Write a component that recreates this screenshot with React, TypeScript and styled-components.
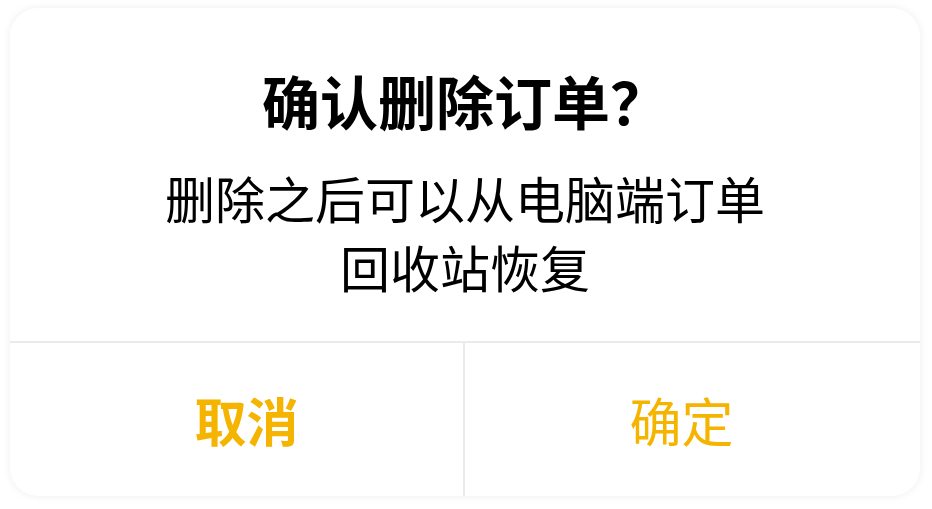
import React from "react";
import styled, { createGlobalStyle } from "styled-components";

const Global = createGlobalStyle`
  html, body { margin: 0; padding: 0; background: #ffffff; }
  body { font-family: "Noto Sans CJK SC", "Noto Sans", sans-serif; }
`;

const Page = styled.div`
  width: 932px;
  height: 509px;
  padding: 8px 0 0 10px;
  box-sizing: border-box;
`;

const Card = styled.div`
  width: 910px;
  height: 488px;
  border-radius: 28px;
  background: #ffffff;
  box-shadow: 0 0 9px rgba(0, 0, 0, 0.07);
  display: flex;
  flex-direction: column;
  overflow: hidden;
`;

const Body = styled.div`
  height: 335px;
  box-sizing: border-box;
  padding-top: 57px;
  display: flex;
  flex-direction: column;
  align-items: center;
  border-bottom: 2px solid #ebebeb;
`;

const Title = styled.div`
  font-size: 58px;
  line-height: 70px;
  font-weight: 700;
  color: #000;
  margin-bottom: 28px;
`;

const Message = styled.div`
  font-size: 50px;
  line-height: 69px;
  font-weight: 400;
  color: #000;
  text-align: center;
`;

const Actions = styled.div`
  flex: 1;
  display: grid;
  grid-template-columns: 1fr 1fr;
`;

const Action = styled.button<{ $bold?: boolean; $side: "left" | "right" }>`
  border: none;
  background: transparent;
  font-family: "Noto Sans CJK SC", "Noto Sans", sans-serif;
  font-size: 52px;
  font-weight: ${(p) => (p.$bold ? 700 : 400)};
  color: #f4b400;
  display: flex;
  align-items: center;
  justify-content: center;
  padding: ${(p) => (p.$side === "left" ? "0 0 0 20px" : "0 22px 0 0")};
  border-right: ${(p) => (p.$side === "left" ? "2px solid #ebebeb" : "none")};
  cursor: pointer;
`;

export default function App() {
  return (
    <>
      <Global />
      <Page>
        <Card>
          <Body>
            <Title>确认删除订单？</Title>
            <Message>
              删除之后可以从电脑端订单
              <br />
              回收站恢复
            </Message>
          </Body>
          <Actions>
            <Action $bold $side="left">取消</Action>
            <Action $side="right">确定</Action>
          </Actions>
        </Card>
      </Page>
    </>
  );
}
